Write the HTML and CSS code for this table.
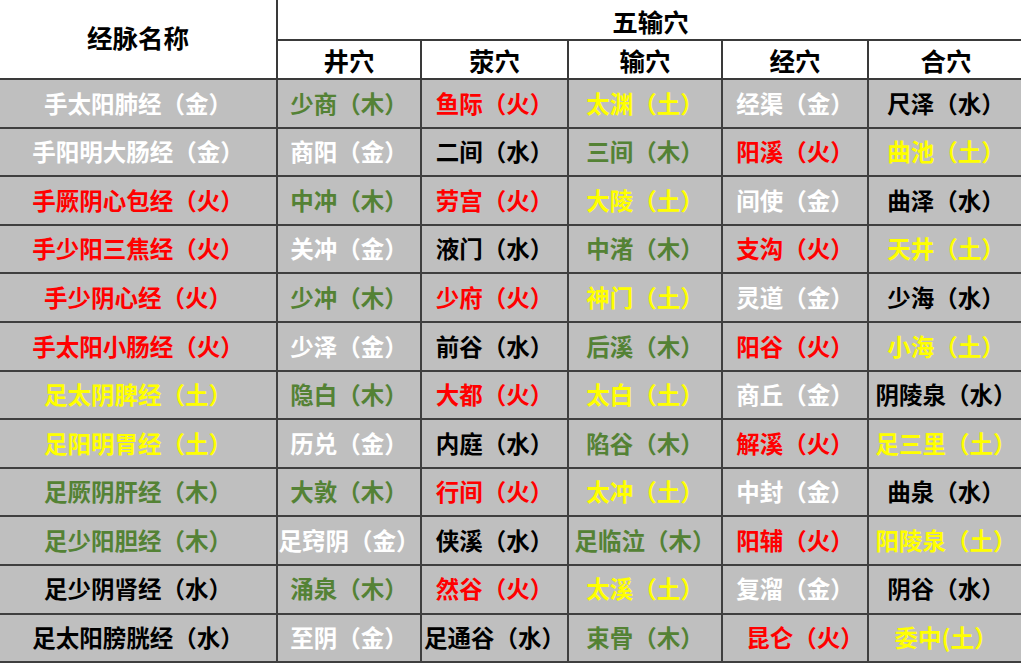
FILE: index.html
```html
<!DOCTYPE html>
<html lang="zh">
<head>
<meta charset="utf-8">
<title>五输穴</title>
<link rel="stylesheet" href="styles.css">
</head>
<body>
<table class="tbl">
  <colgroup>
    <col class="c0"><col class="c1"><col class="c2"><col class="c3"><col class="c4"><col class="c5">
  </colgroup>
  <thead>
    <tr class="h1">
      <th rowspan="2" class="name-h">经脉名称</th>
      <th colspan="5" class="group-h">五输穴</th>
    </tr>
    <tr class="h2">
      <th>井穴</th><th>荥穴</th><th>输穴</th><th>经穴</th><th>合穴</th>
    </tr>
  </thead>
  <tbody>
    <tr><td class="w">手太阳肺经（金）</td><td class="g">少商（木）</td><td class="r">鱼际（火）</td><td class="y">太渊（土）</td><td class="w">经渠（金）</td><td class="k">尺泽（水）</td></tr>
    <tr><td class="w">手阳明大肠经（金）</td><td class="w">商阳（金）</td><td class="k">二间（水）</td><td class="g">三间（木）</td><td class="r">阳溪（火）</td><td class="y">曲池（土）</td></tr>
    <tr><td class="r">手厥阴心包经（火）</td><td class="g">中冲（木）</td><td class="r">劳宫（火）</td><td class="y">大陵（土）</td><td class="w">间使（金）</td><td class="k">曲泽（水）</td></tr>
    <tr><td class="r">手少阳三焦经（火）</td><td class="w">关冲（金）</td><td class="k">液门（水）</td><td class="g">中渚（木）</td><td class="r">支沟（火）</td><td class="y">天井（土）</td></tr>
    <tr><td class="r">手少阴心经（火）</td><td class="g">少冲（木）</td><td class="r">少府（火）</td><td class="y">神门（土）</td><td class="w">灵道（金）</td><td class="k">少海（水）</td></tr>
    <tr><td class="r">手太阳小肠经（火）</td><td class="w">少泽（金）</td><td class="k">前谷（水）</td><td class="g">后溪（木）</td><td class="r">阳谷（火）</td><td class="y">小海（土）</td></tr>
    <tr><td class="y">足太阴脾经（土）</td><td class="g">隐白（木）</td><td class="r">大都（火）</td><td class="y">太白（土）</td><td class="w">商丘（金）</td><td class="k">阴陵泉（水）</td></tr>
    <tr><td class="y">足阳明胃经（土）</td><td class="w">历兑（金）</td><td class="k">内庭（水）</td><td class="g">陷谷（木）</td><td class="r">解溪（火）</td><td class="y">足三里（土）</td></tr>
    <tr><td class="g">足厥阴肝经（木）</td><td class="g">大敦（木）</td><td class="r">行间（火）</td><td class="y">太冲（土）</td><td class="w">中封（金）</td><td class="k">曲泉（水）</td></tr>
    <tr><td class="g">足少阳胆经（木）</td><td class="w">足窍阴（金）</td><td class="k">侠溪（水）</td><td class="g">足临泣（木）</td><td class="r">阳辅（火）</td><td class="y">阳陵泉（土）</td></tr>
    <tr><td class="k">足少阴肾经（水）</td><td class="g">涌泉（木）</td><td class="r">然谷（火）</td><td class="y">太溪（土）</td><td class="w">复溜（金）</td><td class="k">阴谷（水）</td></tr>
    <tr><td class="k">足太阳膀胱经（水）</td><td class="w">至阴（金）</td><td class="k">足通谷（水）</td><td class="g">束骨（木）</td><td class="r indent">昆仑（火）</td><td class="y">委中(土）</td></tr>
  </tbody>
</table>
</body>
</html>
```

FILE: styles.css
```css
html, body {
  margin: 0;
  padding: 0;
  background: #ffffff;
  overflow: hidden;
}
body {
  font-family: "Noto Sans CJK SC", "Noto Sans", sans-serif;
}
.tbl {
  width: 1024px;
  table-layout: fixed;
  border-collapse: collapse;
  border-spacing: 0;
}
.c0 { width: 277px; }
.c1 { width: 144px; }
.c2 { width: 147px; }
.c3 { width: 154px; }
.c4 { width: 146px; }
.c5 { width: 156px; }

th, td {
  padding: 0;
  text-align: center;
  vertical-align: middle;
  white-space: nowrap;
  overflow: visible;
  font-weight: 700;
  border: 2px solid #3a3a3a;
}
thead th {
  background: #ffffff;
  color: #000000;
  font-size: 25.5px;
  line-height: 1;
}
thead tr.h1 th { height: 37px; border-top: none; }
thead tr.h2 th { height: 37px; }
thead th.name-h { border-left: none; padding-bottom: 4px; }
thead th.group-h { padding-top: 2px; }

tbody td {
  background: #bfbfbf;
  font-size: 23.5px;
  line-height: 1;
  height: 46.6px;
  border-color: #3f3f3f;
}
tbody td:first-child { border-left: none; }
tbody td.indent { padding-left: 20px; }

.w { color: #ffffff; }
.g { color: #548235; }
.r { color: #ff0000; }
.y { color: #ffff00; }
.k { color: #000000; }
```
